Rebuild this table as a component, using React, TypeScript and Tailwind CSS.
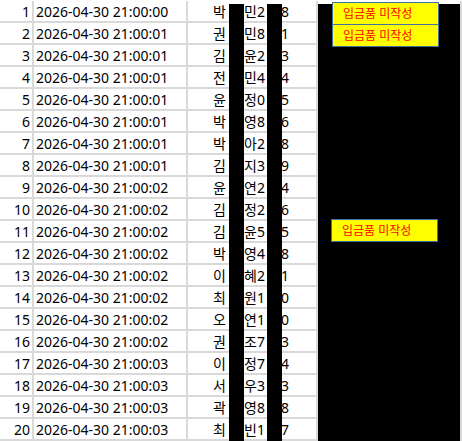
const ROWS: [string, string, string, string][] = [
  ["21:00:00", "박", "민2", "8"],
  ["21:00:01", "권", "민8", "1"],
  ["21:00:01", "김", "윤2", "3"],
  ["21:00:01", "전", "민4", "4"],
  ["21:00:01", "윤", "정0", "5"],
  ["21:00:01", "박", "영8", "6"],
  ["21:00:01", "박", "아2", "8"],
  ["21:00:01", "김", "지3", "9"],
  ["21:00:02", "윤", "연2", "4"],
  ["21:00:02", "김", "정2", "6"],
  ["21:00:02", "김", "윤5", "5"],
  ["21:00:02", "박", "영4", "8"],
  ["21:00:02", "이", "혜2", "1"],
  ["21:00:02", "최", "원1", "0"],
  ["21:00:02", "오", "연1", "0"],
  ["21:00:02", "권", "조7", "3"],
  ["21:00:03", "이", "정7", "4"],
  ["21:00:03", "서", "우3", "3"],
  ["21:00:03", "곽", "영8", "8"],
  ["21:00:03", "최", "빈1", "7"],
];

function Memo({ className }: { className: string }) {
  return (
    <div
      className={`absolute flex h-[23px] w-[107px] items-center border border-[#41719c] bg-[#ffff00] pl-[10px] text-[12px] leading-none text-[#ff0000] ${className}`}
    >
      입금품 미작성
    </div>
  );
}

export default function App() {
  return (
    <div
      className="relative h-[441px] w-[462px] overflow-hidden bg-white pt-[1px] text-[14px] text-black"
      style={{ fontFamily: '"Noto Sans", "Noto Sans CJK KR", sans-serif' }}
    >
      {ROWS.map(([time, first, mid, last], i) => (
        <div key={i} className="flex h-[22px] border-b-2 border-[#d9d9d9] leading-[22px]">
          <div className="w-[34px] border-r-2 border-[#d9d9d9] pr-[2px] text-right">{i + 1}</div>
          <div className="w-[154px] border-r-2 border-[#d9d9d9] pl-[2px] whitespace-nowrap">
            2026-04-30 {time}
          </div>
          <div className="flex w-[130px] border-r-2 border-[#d9d9d9] pl-[25px] whitespace-nowrap">
            <span className="w-[16px]">{first}</span>
            <span className="w-[15px]" />
            <span className="w-[23px]">{mid}</span>
            <span className="w-[14px]" />
            <span>{last}</span>
          </div>
          <div className="w-[144px] border-r-2 border-[#d9d9d9]" />
        </div>
      ))}

      {/* redaction */}
      <div className="absolute left-[229px] top-[4px] bottom-0 w-[15px] bg-black" />
      <div className="absolute left-[267px] top-[4px] bottom-0 w-[15px] bg-black" />
      <div className="absolute left-[318px] top-[4px] bottom-0 w-[142px] bg-black" />

      <Memo className="left-[332px] top-[2px]" />
      <Memo className="left-[332px] top-[24px]" />
      <Memo className="left-[331px] top-[219px]" />
    </div>
  );
}
